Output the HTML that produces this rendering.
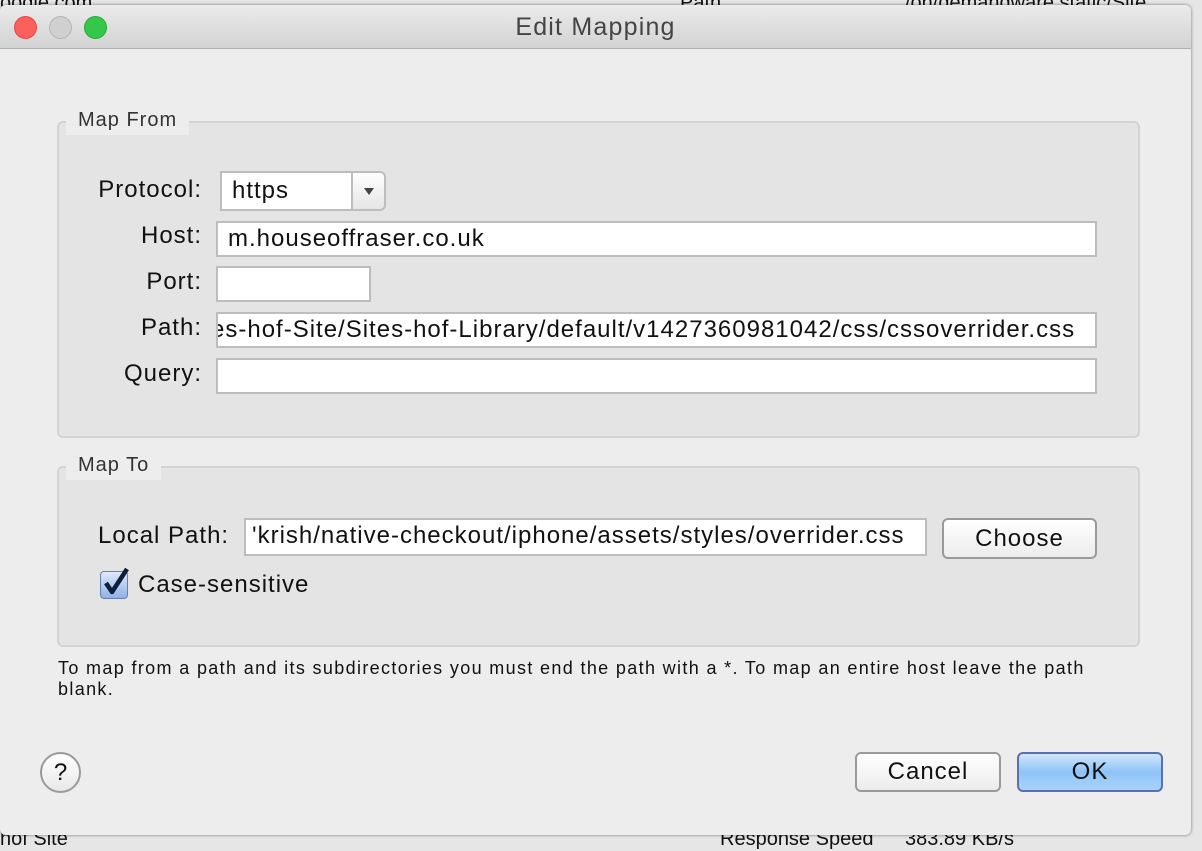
<!DOCTYPE html>
<html><head><meta charset="utf-8"><style>
*{margin:0;padding:0;box-sizing:border-box}
body{width:1202px;height:840px;overflow:hidden;background:#e6e6e6;font-family:"Liberation Sans",sans-serif;position:relative;color:#111}
.a{position:absolute}
.win{left:0;top:5px;width:1191px;height:830px;background:#ededed;border-radius:6px;box-shadow:0 0 3px rgba(0,0,0,.5);overflow:hidden}
.title{left:0;top:0;width:1191px;height:44px;background:linear-gradient(#ebebeb,#d3d3d3);border-bottom:1px solid #b0b0b0}
.dot{width:23px;height:23px;border-radius:50%;top:11px}
.grp{border:2px solid #d3d3d3;border-radius:6px;background:#e4e4e4}
.leg{background:#ededed;font-size:20px;letter-spacing:1px;color:#333;padding:0 12px;line-height:30px}
.t{font-size:24px;letter-spacing:1px}
.lbl{text-align:right;width:200px;left:2px}
.fld{background:#fff;border:2px solid #bdbdbd;line-height:32px;padding-left:10px;white-space:nowrap;overflow:hidden}
.btn{background:linear-gradient(#fff,#ececec);border:2px solid #9a9a9a;border-radius:6px;text-align:center}
</style></head><body>
<div class="a" style="left:0;top:-8px;font-size:20px">oogle.com</div>
<div class="a" style="left:680px;top:-8px;font-size:20px">Path</div>
<div class="a" style="left:905px;top:-8px;font-size:20px;white-space:nowrap">/on/demandware.static/Site</div>
<div class="a" style="left:0;top:828px;font-size:20px">hof Site</div>
<div class="a" style="left:720px;top:828px;font-size:20px">Response Speed</div>
<div class="a" style="left:905px;top:828px;font-size:20px">383.89 KB/s</div>
<div class="a win">
 <div class="a title"></div>
 <div class="a dot" style="left:14px;background:#fc605c;border:1px solid #de4a45"></div>
 <div class="a dot" style="left:49px;background:#d0d0d0;border:1px solid #b5b5b5"></div>
 <div class="a dot" style="left:84px;background:#34c84a;border:1px solid #27a93a"></div>
 <div class="a" style="left:0;width:1191px;top:8px;text-align:center;font-size:25px;letter-spacing:1.2px;color:#444">Edit Mapping</div>

 <div class="a grp" style="left:57px;top:116px;width:1083px;height:317px"></div>
 <div class="a leg" style="left:66px;top:100px">Map From</div>
 <div class="a lbl t" style="top:171px">Protocol:</div>
 <div class="a fld t" style="left:220px;top:166px;width:133px;height:40px;line-height:36px">https</div>
 <div class="a" style="left:351px;top:166px;width:35px;height:40px;background:linear-gradient(#fff,#e6e6e6);border:2px solid #bdbdbd;border-radius:0 6px 6px 0"><div class="a" style="left:11px;top:15px;border-left:5px solid transparent;border-right:5px solid transparent;border-top:7px solid #444"></div></div>
 <div class="a lbl t" style="top:217px">Host:</div>
 <div class="a fld t" style="left:216px;top:216px;width:881px;height:36px">m.houseoffraser.co.uk</div>
 <div class="a lbl t" style="top:263px">Port:</div>
 <div class="a fld" style="left:216px;top:261px;width:155px;height:36px"></div>
 <div class="a lbl t" style="top:309px">Path:</div>
 <div class="a fld t" style="left:216px;top:307px;width:881px;height:36px;padding-left:0"><span style="margin-left:-7px">es-hof-Site/Sites-hof-Library/default/v1427360981042/css/cssoverrider.css</span></div>
 <div class="a lbl t" style="top:355px">Query:</div>
 <div class="a fld" style="left:216px;top:353px;width:881px;height:36px"></div>

 <div class="a grp" style="left:57px;top:461px;width:1083px;height:181px"></div>
 <div class="a leg" style="left:66px;top:445px">Map To</div>
 <div class="a t" style="left:98px;top:517px">Local Path:</div>
 <div class="a fld t" style="left:244px;top:513px;width:683px;height:38px;padding-left:6px">'krish/native-checkout/iphone/assets/styles/overrider.css</div>
 <div class="a btn t" style="left:942px;top:513px;width:155px;height:41px;line-height:37px">Choose</div>
 <div class="a" style="left:100px;top:566px;width:28px;height:28px;border:1px solid #6b7fae;border-radius:4px;background:linear-gradient(#dfe9fb,#8fb0e8)"></div>
 <svg class="a" style="left:100px;top:560px" width="34" height="34" viewBox="0 0 34 34"><path d="M6 18 L12 27 L27 4" fill="none" stroke="#0e1f3a" stroke-width="4.5" stroke-linejoin="round"/></svg>
 <div class="a t" style="left:138px;top:566px">Case-sensitive</div>

 <div class="a" style="left:58px;top:653px;font-size:18px;letter-spacing:1.35px;line-height:21px;width:1060px">To map from a path and its subdirectories you must end the path with a *. To map an entire host leave the path blank.</div>

 <div class="a" style="left:40px;top:747px;width:41px;height:41px;border-radius:50%;border:2px solid #9a9a9a;background:linear-gradient(#fff,#e8e8e8);text-align:center;font-size:24px;line-height:37px">?</div>
 <div class="a btn t" style="left:855px;top:747px;width:146px;height:40px;line-height:36px">Cancel</div>
 <div class="a btn t" style="left:1017px;top:747px;width:146px;height:40px;line-height:36px;border-color:#5a6fb0;background:linear-gradient(#d2e6fd,#8ec3f7 50%,#a8d3fb)">OK</div>
</div>
</body></html>
